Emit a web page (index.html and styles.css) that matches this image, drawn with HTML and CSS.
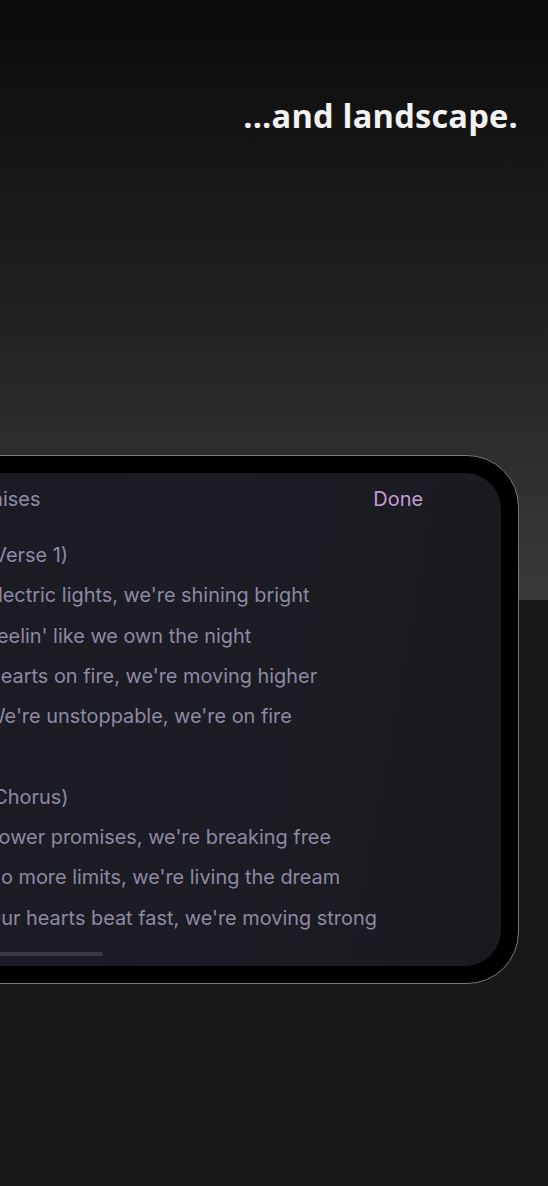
FILE: index.html
```html
<!DOCTYPE html>
<html lang="en">
<head>
    <meta charset="UTF-8">
    <meta name="viewport" content="width=device-width, initial-scale=1.0">
    <title>Lyrics - Landscape</title>
    <link rel="stylesheet" href="styles.css">
</head>
<body>
    <header class="hero">
        <h1>...and landscape.</h1>
    </header>

    <div class="device">
        <div class="screen">
            <div class="screen-header">
                <span class="song-title">Power Promises</span>
                <span class="done">Done</span>
            </div>

            <div class="lyrics">
                <p>(Verse 1)</p>
                <p>Electric lights, we're shining bright</p>
                <p>Feelin' like we own the night</p>
                <p>Hearts on fire, we're moving higher</p>
                <p>We're unstoppable, we're on fire</p>
                <p class="blank">&nbsp;</p>
                <p>(Chorus)</p>
                <p>Power promises, we're breaking free</p>
                <p>No more limits, we're living the dream</p>
                <p>Our hearts beat fast, we're moving strong</p>
            </div>

            <div class="scroll-bar"></div>
        </div>
    </div>
</body>
</html>
```

FILE: styles.css
```css
html, body {
    margin: 0;
    padding: 0;
}

body {
    width: 548px;
    height: 1186px;
    overflow: hidden;
    background: linear-gradient(to bottom, #0b0b0b 0, #202020 300px, #3a3a3a 600px, #181818 600px, #181818 100%);
    font-family: Inter, Roboto, sans-serif;
}

.hero {
    padding: 95px 30px 0 0;
    text-align: right;
}

.hero h1 {
    margin: 0;
    font-family: "Open Sans", sans-serif;
    font-weight: 700;
    font-size: 32.6px;
    line-height: 42px;
    color: #f2f2f2;
    letter-spacing: 0.2px;
}

.device {
    margin: 318px 0 0 -120px;
    width: 639px;
    height: 529px;
    padding: 17px;
    box-sizing: border-box;
    background: #000;
    border: 1px solid #7a7a7a;
    border-radius: 52px;
}

.screen {
    height: 100%;
    border-radius: 36px;
    background: linear-gradient(100deg, #1c1b24 0%, #1c1c25 45%, #1a1a1e 100%);
    overflow: hidden;
    box-sizing: border-box;
    padding-top: 13px;
}

.screen-header {
    display: flex;
    justify-content: space-between;
    align-items: center;
    height: 26px;
    padding: 0 78px 0 0;
    font-size: 19.9px;
}

.song-title {
    margin-left: -9px;
    color: #908ea8;
}

.done {
    color: #c89ad8;
}

.lyrics {
    margin-top: 23px;
    padding-left: 88px;
}

.lyrics p {
    margin: 0;
    height: 40.3px;
    line-height: 40.3px;
    font-size: 19.9px;
    color: #8c8aa2;
    white-space: nowrap;
}

.scroll-bar {
    margin: 14px 0 0 40px;
    width: 165px;
    height: 4px;
    border-radius: 2px;
    background: #393940;
}
```
